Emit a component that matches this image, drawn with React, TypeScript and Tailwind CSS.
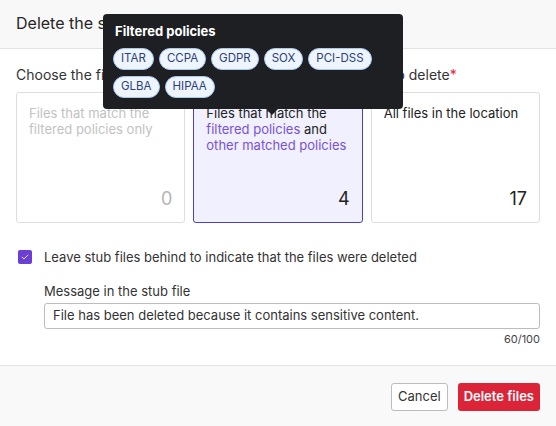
import React from 'react'

// ─── Data ─────────────────────────────────────────────────────────────────────

const POLICIES = ['ITAR', 'CCPA', 'GDPR', 'SOX', 'PCI-DSS', 'GLBA', 'HIPAA']

// ─── Pieces ───────────────────────────────────────────────────────────────────

function PolicyChip({ name }: { name: string }) {
  return (
    <span className="flex h-[22px] items-center rounded-full border-[1.5px] border-[#a9c9f5] bg-[#eef5ff] px-[7px] text-[11.5px] leading-none text-[#2d3f78]">
      {name}
    </span>
  )
}

function OptionCard({
  children,
  count,
  selected,
  disabled,
}: {
  children: React.ReactNode
  count: number
  selected?: boolean
  disabled?: boolean
}) {
  return (
    <div
      className={`flex h-[131px] flex-col justify-between rounded-[3px] border px-3 pt-[12px] pb-[12px] text-[13px] leading-[16px] ${
        selected
          ? 'border-[#4a3fce] bg-[#f0f0fe] text-[#222]'
          : 'border-[#dedede] bg-white'
      } ${disabled ? 'text-[#c2c2c2]' : 'text-[#222]'}`}
    >
      <div>{children}</div>
      <div
        className={`text-right text-[18px] leading-[22px] ${
          disabled ? 'text-[#b5b5b5]' : 'text-[#222]'
        }`}
      >
        {count}
      </div>
    </div>
  )
}

// ─── Component ────────────────────────────────────────────────────────────────

export default function App() {
  return (
    <div className="relative flex h-[426px] w-[556px] flex-col overflow-hidden bg-white font-['Inter',sans-serif] text-[#333]">
      {/* ── Header ─────────────────────────────────────────────────────── */}
      <div className="flex h-[49px] shrink-0 items-center border-b border-[#e3e3e6] bg-[#f8f8f9] px-4 pb-[2px] text-[16px] text-[#262626]">
        Delete the sensitive files
      </div>

      {/* ── Body ───────────────────────────────────────────────────────── */}
      <div className="shrink-0 px-4 pt-[16px] pb-[19px]">
        <div className="text-[14px] leading-[20px] text-[#333]">
          Choose the files in the selected location which you want to delete
          <span className="text-[#e0263c]">*</span>
        </div>

        <div className="mt-[7px] grid grid-cols-3 gap-2">
          <OptionCard count={0} disabled>
            Files that match the
            <br />
            filtered policies only
          </OptionCard>
          <OptionCard count={4} selected>
            Files that match the
            <br />
            <span className="text-[#7a52d6]">filtered policies</span> and
            <br />
            <span className="text-[#7a52d6]">other matched policies</span>
          </OptionCard>
          <OptionCard count={17}>All files in the location</OptionCard>
        </div>

        <label className="mt-[24px] flex items-center gap-3 pl-[2px] text-[13px] leading-[20px] text-[#333]">
          <span className="flex h-[14px] w-[14px] items-center justify-center rounded-[2px] bg-[#6c3fd4]">
            <svg viewBox="0 0 12 12" className="h-[10px] w-[10px]" fill="none">
              <path d="M2.5 6.2 4.8 8.4 9.5 3.6" stroke="white" strokeWidth="1" strokeLinecap="round" strokeLinejoin="round" />
            </svg>
          </span>
          Leave stub files behind to indicate that the files were deleted
        </label>

        <div className="pl-[28px]">
          <div className="mt-[14px] text-[13px] leading-[20px] text-[#333]">Message in the stub file</div>
          <div className="mt-[2px] flex h-[26px] items-center rounded-[3px] border border-[#bcbcbc] px-2 text-[13px] text-[#333]">
            File has been deleted because it contains sensitive content.
          </div>
          <div className="mt-[3px] text-right text-[11px] leading-[14px] text-[#444]">60/100</div>
        </div>
      </div>

      {/* ── Footer ─────────────────────────────────────────────────────── */}
      <div className="flex flex-1 items-start justify-end gap-[10px] border-t border-[#e3e3e6] bg-[#f9f9f9] px-4 pt-[17px]">
        <button className="h-[28px] rounded-[3px] border border-[#bdbdbd] bg-white px-[6px] text-[13px] text-[#333]">
          Cancel
        </button>
        <button className="h-[28px] rounded-[3px] bg-[#dc2438] px-[6px] text-[13px] font-semibold text-white">
          Delete files
        </button>
      </div>

      {/* ── Tooltip ────────────────────────────────────────────────────── */}
      <div className="absolute top-[14px] left-[103px] h-[95px] w-[300px] rounded-[4px] bg-[#1e1f23] px-[10px] pt-[8px]">
        <div className="pl-[2px] text-[13px] leading-[18px] font-bold text-white">Filtered policies</div>
        <div className="mt-[8px] flex flex-wrap gap-x-[5px] gap-y-[6px]">
          {POLICIES.map((p) => (
            <PolicyChip key={p} name={p} />
          ))}
        </div>
        <div className="absolute top-[95px] left-[163px] h-0 w-0 border-x-[6px] border-t-[6px] border-x-transparent border-t-[#1e1f23]" />
      </div>
    </div>
  )
}
